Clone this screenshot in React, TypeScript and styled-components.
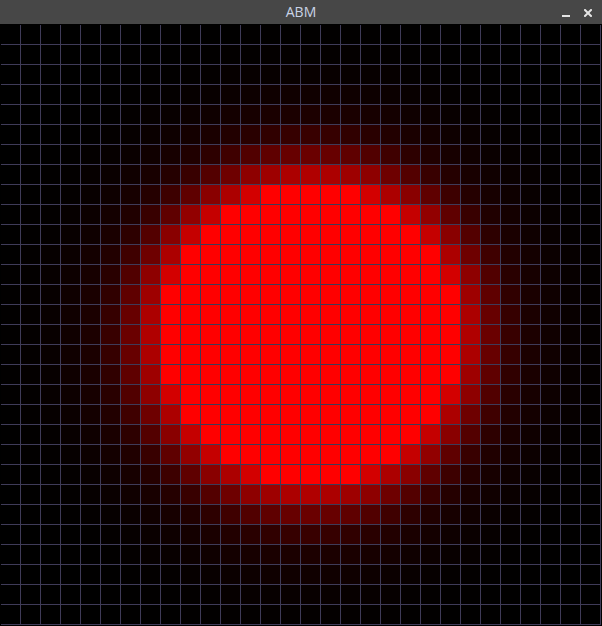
import styled, { createGlobalStyle } from 'styled-components';

const GRID = 30;
const CENTER = 15;

// red level by distance (in cells) from the centre cell, read off the screenshot
const FALLOFF: [number, number][] = [
    [0, 255], [7.3, 255], [7.6, 212], [7.8, 198], [8.0, 176], [8.25, 158],
    [8.5, 145], [9.0, 106], [9.5, 80], [10, 56], [10.25, 46], [11, 28],
    [12, 16], [13, 8], [14, 4], [15, 2], [16, 1], [17.5, 0], [40, 0],
];

function redLevel(d: number): number {
    for (let i = 1; i < FALLOFF.length; i++) {
        const [d1, v1] = FALLOFF[i];
        if (d <= d1) {
            const [d0, v0] = FALLOFF[i - 1];
            const t = (d - d0) / (d1 - d0);
            return Math.round(v0 + (v1 - v0) * t);
        }
    }
    return 0;
}

const levels: number[] = [];
for (let r = 0; r < GRID; r++) {
    for (let c = 0; c < GRID; c++) {
        levels.push(redLevel(Math.hypot(r - CENTER, c - CENTER)));
    }
}

export default function App() {
    return (
        <>
            <GlobalStyle/>
            <Window>
                <TitleBar>
                    <span/>
                    <Title>ABM</Title>
                    <Controls>
                        <ControlButton aria-label="minimize">
                            <svg width="8" height="8" viewBox="0 0 8 8">
                                <rect x="0" y="6" width="8" height="2" fill="currentColor"/>
                            </svg>
                        </ControlButton>
                        <ControlButton aria-label="close">
                            <svg width="8" height="8" viewBox="0 0 8 8">
                                <path d="M1 1L7 7M7 1L1 7" stroke="currentColor" strokeWidth="2"
                                      strokeLinecap="square"/>
                            </svg>
                        </ControlButton>
                    </Controls>
                </TitleBar>
                <Board>
                    {levels.map((level, i) => (
                        <Cell key={i} $level={level}/>
                    ))}
                </Board>
            </Window>
        </>
    );
}

const GlobalStyle = createGlobalStyle`
    html, body {
        margin: 0;
        padding: 0;
        background: #000;
    }
`;

const Window = styled.div`
    width: 602px;
    height: 626px;
    display: flex;
    flex-direction: column;
    background: #000;
    overflow: hidden;
`;

const TitleBar = styled.div`
    height: 24px;
    flex: none;
    display: grid;
    grid-template-columns: 1fr auto 1fr;
    align-items: center;
    background: #474747;
`;

const Title = styled.span`
    color: #c9d3e6;
    font-family: "Open Sans", "Noto Sans", sans-serif;
    font-size: 14px;
    line-height: 24px;
`;

const Controls = styled.div`
    justify-self: end;
    display: flex;
    align-items: center;
    gap: 14px;
    padding-right: 10px;
    padding-top: 1px;
`;

const ControlButton = styled.div`
    width: 8px;
    height: 8px;
    display: flex;
    color: #e4e4e4;
`;

const Board = styled.div`
    display: grid;
    grid-template-columns: repeat(${GRID}, 20px);
    grid-auto-rows: 20px;
    padding: 1px 0 0 1px;
`;

const Cell = styled.div.attrs<{ $level: number }>(p => ({
    style: {background: `rgb(${p.$level}, 0, 0)`},
}))`
    box-sizing: border-box;
    border-right: 1px solid #3f3b58;
    border-bottom: 1px solid #3f3b58;
`;
